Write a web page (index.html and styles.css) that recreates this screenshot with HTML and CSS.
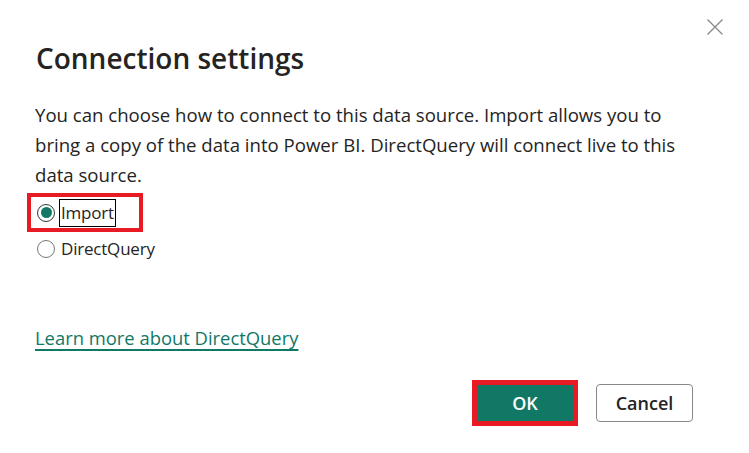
FILE: index.html
```html
<!DOCTYPE html>
<html lang="en">
<head>
<meta charset="utf-8">
<title>Connection settings</title>
<link rel="stylesheet" href="styles.css">
</head>
<body>
<div class="dialog">
  <div class="topbar">
    <button class="close" aria-label="Close">
      <svg width="16" height="16" viewBox="0 0 16 16"><path d="M0.5 0.5 L15.5 15.5 M15.5 0.5 L0.5 15.5" stroke="#8a8886" stroke-width="1.3" fill="none"/></svg>
    </button>
  </div>
  <h1 class="title">Connection settings</h1>
  <p class="desc">You can choose how to connect to this data source. Import allows you to bring a copy of the data into Power BI. DirectQuery will connect live to this data source.</p>
  <div class="options">
    <label class="option highlighted"><span class="radio checked"></span><span class="label focused">Import</span></label>
    <label class="option"><span class="radio"></span><span class="label">DirectQuery</span></label>
  </div>
  <a class="link" href="#">Learn more about DirectQuery</a>
  <div class="actions">
    <button class="btn primary highlighted">OK</button>
    <button class="btn secondary">Cancel</button>
  </div>
</div>
</body>
</html>
```

FILE: styles.css
```css
html, body {
  margin: 0;
  padding: 0;
  background: #ffffff;
}
body {
  font-family: "Open Sans", "Noto Sans", sans-serif;
  color: #252423;
  width: 749px;
  height: 453px;
  overflow: hidden;
}
.dialog {
  box-sizing: border-box;
  height: 453px;
  padding: 0 56px 0 35px;
  display: flex;
  flex-direction: column;
}
.topbar {
  display: flex;
  justify-content: flex-end;
  padding-top: 15px;
  margin-right: -34px;
  height: 24px;
}
.close {
  width: 24px;
  height: 24px;
  padding: 0;
  border: none;
  background: transparent;
  display: flex;
  align-items: center;
  justify-content: center;
}
.title {
  margin: 3px 0 0 1px;
  font-size: 28px;
  line-height: 32px;
  font-weight: 600;
  color: #252423;
}
.desc {
  margin: 26px 0 0;
  max-width: 665px;
  font-size: 18.6px;
  line-height: 30px;
}
.options {
  margin-top: 7px;
  display: flex;
  flex-direction: column;
  gap: 7px;
  align-items: flex-start;
}
.option {
  display: flex;
  align-items: center;
  height: 28px;
  padding-left: 2px;
  font-size: 17px;
  letter-spacing: -0.2px;
}
.option.highlighted {
  height: 31px;
  margin-left: -4px;
  padding-left: 6px;
  padding-right: 23px;
  outline: 4px solid #e81a24;
}
.radio {
  box-sizing: border-box;
  width: 18px;
  height: 18px;
  border-radius: 50%;
  border: 1.5px solid #7a7876;
  display: flex;
  align-items: center;
  justify-content: center;
  margin-right: 6px;
}
.radio.checked {
  border-color: #2c3a36;
  margin-right: 4px;
}
.radio.checked::after {
  content: "";
  width: 11px;
  height: 11px;
  border-radius: 50%;
  background: #117865;
}
.label {
  line-height: 26px;
}
.label.focused {
  border: 1.5px solid #000000;
  padding: 0 1px;
}
.link {
  margin-top: 60px;
  align-self: flex-start;
  font-size: 18.4px;
  line-height: 30px;
  color: #117865;
  text-decoration: underline;
  text-decoration-thickness: 2px;
  text-underline-offset: 4px;
}
.actions {
  margin-top: 31px;
  display: flex;
  justify-content: flex-end;
  align-items: center;
  gap: 23px;
}
.btn {
  font-family: "Open Sans", "Noto Sans", sans-serif;
  font-size: 18px;
  font-weight: 600;
  height: 36px;
  width: 96px;
  border-radius: 3px;
  padding: 0;
}
.btn.primary {
  background: #117865;
  color: #ffffff;
  border: none;
}
.btn.primary.highlighted {
  outline: 5px solid #e81a24;
  border-radius: 0;
}
.btn.secondary {
  height: 38px;
  width: 97px;
  background: #ffffff;
  color: #252423;
  border: 1px solid #8a8886;
  border-radius: 4px;
}
```
